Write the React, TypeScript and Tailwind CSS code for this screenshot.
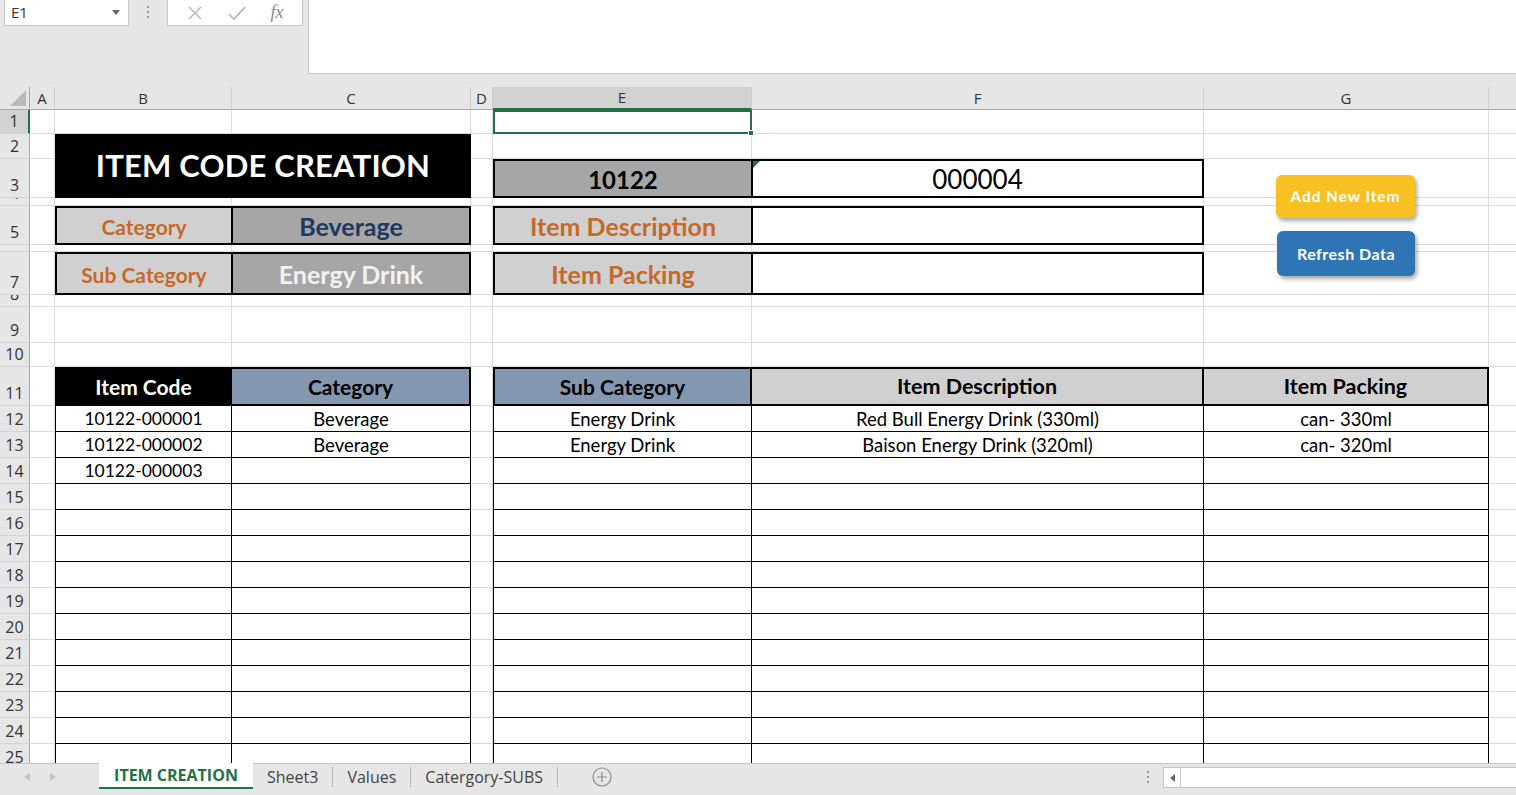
import React from "react"
import { clsx } from "clsx"

// sheet tracks: row header, A..G and a wide H that runs off the window
const COLS = "grid-cols-[30px_25px_177px_239px_22px_259px_452px_285px_240px]"
const ROWS = "grid-rows-[23px_24px_25px_39px_8px_39px_7px_43px_12px_36px_24px_39px_repeat(14,26px)]"

const letters = ["A", "B", "C", "D", "E", "F", "G", ""]
const rowNums = Array.from({ length: 25 }, (_, i) => i + 1)

type Line = { code: string; category: string; sub: string; desc: string; packing: string }

const filled: Line[] = [
  { code: "10122-000001", category: "Beverage", sub: "Energy Drink", desc: "Red Bull Energy Drink (330ml)", packing: "can- 330ml" },
  { code: "10122-000002", category: "Beverage", sub: "Energy Drink", desc: "Baison Energy Drink (320ml)", packing: "can- 320ml" },
  { code: "10122-000003", category: "", sub: "", desc: "", packing: "" },
]
const blank: Line = { code: "", category: "", sub: "", desc: "", packing: "" }
const lines: Line[] = [...filled, ...Array.from({ length: 11 }, () => blank)]

const lato = "font-['Lato',sans-serif]"

function FormulaBar() {
  return (
    <div className="flex h-[87px] bg-[#e6e6e6]">
      <div className="flex w-[308px] items-start">
        <div className="ml-[4px] flex h-[26px] w-[125px] items-center justify-between border border-t-0 border-[#c6c6c6] bg-white pl-[6px] pr-[8px] font-['Open_Sans',sans-serif] text-[15px] text-[#333]">
          <span>E1</span>
          <svg width="8" height="5" viewBox="0 0 8 5">
            <path d="M0 0h8L4 5z" fill="#666" />
          </svg>
        </div>
        <div className="flex w-[38px] flex-col items-center gap-[3px] pt-[6px]">
          <span className="h-[2px] w-[2px] bg-[#999]" />
          <span className="h-[2px] w-[2px] bg-[#999]" />
          <span className="h-[2px] w-[2px] bg-[#999]" />
        </div>
        <div className="flex h-[26px] w-[136px] items-center justify-around border border-t-0 border-[#c6c6c6] bg-white px-[6px]">
          <svg width="16" height="16" viewBox="0 0 16 16">
            <path d="M2 2l12 12M14 2L2 14" stroke="#b4b4b4" strokeWidth="1.4" />
          </svg>
          <svg width="18" height="16" viewBox="0 0 18 16">
            <path d="M1 9l5 5L17 2" stroke="#b4b4b4" strokeWidth="1.6" fill="none" />
          </svg>
          <span className="font-['Liberation_Serif',serif] text-[18px] italic text-[#8a8a8a]">fx</span>
        </div>
      </div>
      <div className="h-[74px] flex-1 border-b border-l border-[#c6c6c6] bg-white" />
    </div>
  )
}

function GridLines() {
  return (
    <div className={clsx("col-start-1 row-start-1 grid", COLS, ROWS)}>
      <div className="flex items-end justify-end border-b border-r border-[#a8a8a8] bg-[#e6e6e6] pb-[3px] pr-[3px]">
        <svg width="16" height="16" viewBox="0 0 16 16">
          <path d="M16 0v16H0z" fill="#b9b9b9" />
        </svg>
      </div>
      {letters.map((l, i) => (
        <div
          key={i}
          className={clsx(
            "flex items-center justify-center border-r border-r-[#cdcdcd] font-['Open_Sans',sans-serif] text-[15px] text-[#333]",
            l === "E" ? "border-b-2 border-b-[#217346] bg-[#d2d2d2]" : "border-b border-b-[#a8a8a8] bg-[#e6e6e6]"
          )}
        >
          {l}
        </div>
      ))}
      {rowNums.map((r) => (
        <React.Fragment key={r}>
          <div
            className={clsx(
              "flex items-end justify-center overflow-hidden border-b border-b-[#d2d2d2] pb-[3px] font-['Open_Sans',sans-serif] text-[16px] leading-[18px] text-[#333]",
              r === 1 ? "border-r-2 border-r-[#217346] bg-[#d2d2d2]" : "border-r border-r-[#a8a8a8] bg-[#e6e6e6]"
            )}
          >
            <span>{r}</span>
          </div>
          {letters.map((_, i) => (
            <div key={i} className="border-b border-r border-[#dcdcdc] bg-white" />
          ))}
        </React.Fragment>
      ))}
    </div>
  )
}

function FieldPair({ pos, label, value, valueClass }: { pos: string; label: string; value: string; valueClass: string }) {
  return (
    <div className={clsx("flex border-2 border-black", pos)}>
      <div className="flex w-[176px] items-center justify-center border-r-2 border-black bg-[#d0d0d0] pt-[2px] text-[21px] font-bold text-[#c5692a]">
        {label}
      </div>
      <div className={clsx("flex flex-1 items-center justify-center bg-[#a6a6a6] pt-[2px] text-[25px] font-bold", valueClass)}>{value}</div>
    </div>
  )
}

function EntryRow({ pos, label, children, labelClass }: { pos: string; label: string; children?: React.ReactNode; labelClass: string }) {
  return (
    <div className={clsx("flex border-2 border-black", pos)}>
      <div className={clsx("flex w-[258px] items-center justify-center border-r-2 border-black pt-[2px] font-bold", labelClass)}>{label}</div>
      <div className="relative flex flex-1 items-center justify-center bg-white pt-[2px]">{children}</div>
    </div>
  )
}

function Content() {
  return (
    <div className={clsx("col-start-1 row-start-1 grid text-black", COLS, ROWS, lato)}>
      {/* active cell E1 */}
      <div className="relative col-start-6 row-start-2 border-2 border-[#217346]">
        <span className="absolute -bottom-[4px] -right-[4px] h-[6px] w-[6px] border border-white bg-[#217346]" />
      </div>

      <div className="col-start-3 col-span-2 row-start-3 row-span-2 flex items-center justify-center bg-black pb-[2px] text-[31px] font-bold tracking-[0.2px] text-white">
        ITEM CODE CREATION
      </div>

      <FieldPair pos="col-start-3 col-span-2 row-start-6" label="Category" value="Beverage" valueClass="text-[#1f3864]" />
      <FieldPair pos="col-start-3 col-span-2 row-start-8" label="Sub Category" value="Energy Drink" valueClass="text-[#f2f2f2]" />

      <EntryRow pos="col-start-6 col-span-2 row-start-4" label="10122" labelClass="bg-[#a6a6a6] text-[24px] text-black">
        <svg className="absolute left-0 top-0" width="7" height="7" viewBox="0 0 7 7">
          <path d="M0 0h7L0 7z" fill="#217346" />
        </svg>
        <span className="text-[26px]">000004</span>
      </EntryRow>
      <EntryRow pos="col-start-6 col-span-2 row-start-6" label="Item Description" labelClass="bg-[#d0d0d0] text-[25px] text-[#c5692a]" />
      <EntryRow pos="col-start-6 col-span-2 row-start-8" label="Item Packing" labelClass="bg-[#d0d0d0] text-[25px] text-[#c5692a]" />

      {/* left listing: code + category */}
      <div className="col-start-3 col-span-2 row-start-12 row-span-15 grid grid-cols-[177px_239px] grid-rows-[39px_repeat(14,26px)] text-[18.5px]">
        <div className="flex items-center justify-center border-2 border-black bg-black text-[21px] font-bold text-white">Item Code</div>
        <div className="flex items-center justify-center border-y-2 border-r-2 border-black bg-[#8497b0] text-[21px] font-bold">Category</div>
        {lines.map((l, i) => (
          <React.Fragment key={i}>
            <div className="flex items-center justify-center border-x border-b border-black pt-[2px] text-[17.5px]">{l.code}</div>
            <div className="flex items-center justify-center border-b border-r border-black pt-[2px]">{l.category}</div>
          </React.Fragment>
        ))}
      </div>

      {/* right listing: sub category, description, packing */}
      <div className="col-start-6 col-span-3 row-start-12 row-span-15 grid grid-cols-[259px_452px_285px] grid-rows-[39px_repeat(14,26px)] text-[18.5px]">
        <div className="flex items-center justify-center border-2 border-black bg-[#8497b0] text-[21px] font-bold">Sub Category</div>
        <div className="flex items-center justify-center border-y-2 border-r-2 border-black bg-[#d0d0d0] text-[21.5px] font-bold">Item Description</div>
        <div className="flex items-center justify-center border-y-2 border-r-2 border-black bg-[#d0d0d0] text-[21.5px] font-bold">Item Packing</div>
        {lines.map((l, i) => (
          <React.Fragment key={i}>
            <div className="flex items-center justify-center border-x border-b border-black pt-[2px]">{l.sub}</div>
            <div className="flex items-center justify-center border-b border-r border-black pt-[2px]">{l.desc}</div>
            <div className="flex items-center justify-center border-b border-r border-black pt-[2px]">{l.packing}</div>
          </React.Fragment>
        ))}
      </div>
    </div>
  )
}

function SheetTabs() {
  const tabs = ["Sheet3", "Values", "Catergory-SUBS"]
  return (
    <div className="flex h-[32px] items-start border-t border-[#c6c6c6] bg-[#e6e6e6] font-['Open_Sans',sans-serif] text-[16px] text-[#444]">
      <div className="flex h-[26px] w-[99px] items-center gap-[20px] pl-[24px]">
        <svg width="6" height="8" viewBox="0 0 6 8">
          <path d="M6 0v8L0 4z" fill="#c4c4c4" />
        </svg>
        <svg width="6" height="8" viewBox="0 0 6 8">
          <path d="M0 0v8l6-4z" fill="#c4c4c4" />
        </svg>
      </div>
      <div className="-mt-px flex h-[26px] w-[154px] items-center justify-center border-b-2 border-[#217346] bg-white font-bold text-[#217346]">
        ITEM CREATION
      </div>
      {tabs.map((t) => (
        <div key={t} className="flex h-[26px] items-center">
          <span className="px-[14px]">{t}</span>
          <span className="h-[20px] w-px bg-[#b5b5b5]" />
        </div>
      ))}
      <div className="ml-[34px] flex h-[26px] items-center">
        <svg width="20" height="20" viewBox="0 0 20 20">
          <circle cx="10" cy="10" r="9" stroke="#8a8a8a" strokeWidth="1.2" fill="none" />
          <path d="M10 5v10M5 10h10" stroke="#8a8a8a" strokeWidth="1.2" />
        </svg>
      </div>
      <div className="flex-1" />
      <div className="mr-[14px] flex h-[26px] flex-col items-center justify-center gap-[3px]">
        <span className="h-[2px] w-[2px] bg-[#999]" />
        <span className="h-[2px] w-[2px] bg-[#999]" />
        <span className="h-[2px] w-[2px] bg-[#999]" />
      </div>
      <div className="mt-[3px] flex h-[21px] w-[353px] border border-r-0 border-[#c6c6c6] bg-white">
        <div className="flex w-[17px] items-center justify-center border-r border-[#c6c6c6]">
          <svg width="5" height="8" viewBox="0 0 5 8">
            <path d="M5 0v8L0 4z" fill="#666" />
          </svg>
        </div>
      </div>
    </div>
  )
}

export default function App() {
  return (
    <div className="h-[795px] w-[1516px] overflow-hidden bg-white">
      <FormulaBar />
      <div className="relative grid h-[676px] overflow-hidden">
        <GridLines />
        <Content />
        <button className={clsx("absolute left-[1276px] top-[88px] h-[43px] w-[139px] rounded-[6px] bg-[#f8c022] text-[15.5px] font-bold tracking-[0.9px] text-white shadow-[2px_3px_4px_rgba(0,0,0,0.35)]", lato)}>
          Add New Item
        </button>
        <button className={clsx("absolute left-[1277px] top-[144px] h-[45px] w-[138px] rounded-[6px] bg-[#2e75b6] text-[16px] font-bold tracking-[0.5px] text-white shadow-[2px_3px_4px_rgba(0,0,0,0.35)]", lato)}>
          Refresh Data
        </button>
      </div>
      <SheetTabs />
    </div>
  )
}
